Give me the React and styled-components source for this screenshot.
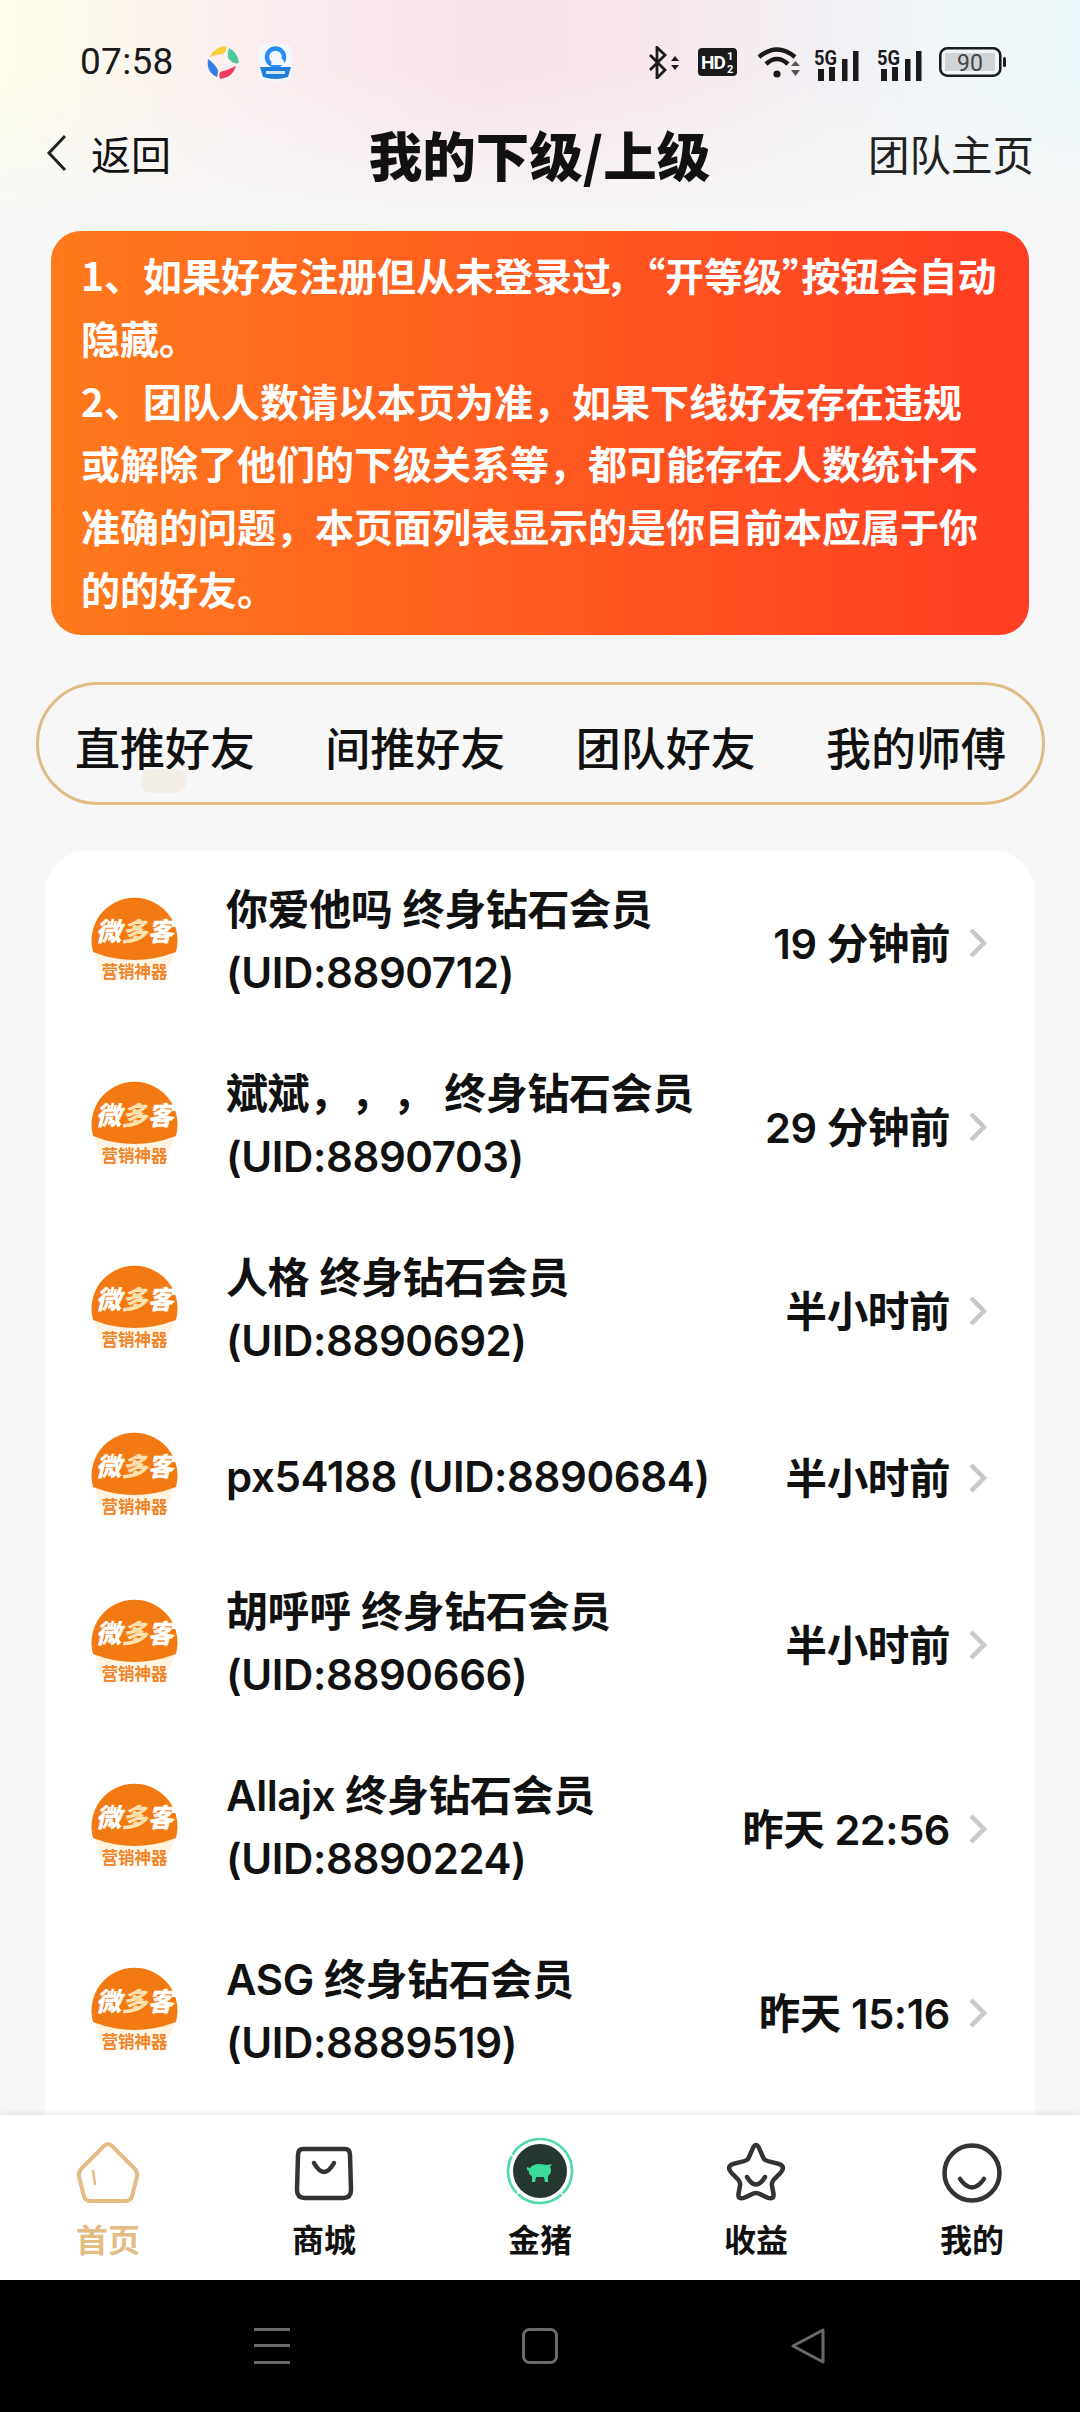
import styled, { createGlobalStyle } from "styled-components";

const Global = createGlobalStyle`
  html, body {
    margin: 0;
    padding: 0;
    background: #f7f7f7;
  }
  * {
    box-sizing: border-box;
  }
`;

const FONT = `"Noto Sans CJK SC", "Noto Sans", sans-serif`;
const LIST_FONT = `Inter, "Noto Sans CJK SC", sans-serif`;

const Page = styled.div`
  width: 1080px;
  height: 2412px;
  display: flex;
  flex-direction: column;
  overflow: hidden;
  font-family: ${FONT};
  text-spacing-trim: space-all;
  color: #111;
  background:
    linear-gradient(to bottom, rgba(247, 247, 247, 0) 0, rgba(247, 247, 247, 0) 70px, #f7f7f7 225px) no-repeat,
    linear-gradient(to right, #fdfdea 0, #fbeff0 22%, #f8e3ea 45%, #f7e8ee 62%, #f0f5f8 85%, #ecf8fb 100%) no-repeat,
    #f7f7f7;
  background-size: 100% 230px, 100% 230px, auto;
`;

const Content = styled.div`
  flex: 1;
  min-height: 0;
  overflow: hidden;
`;

const StatusBar = styled.div`
  height: 80px;
  padding: 44px 73px 0 80px;
  display: flex;
  align-items: center;
`;

const Time = styled.span`
  font-family: Roboto, sans-serif;
  font-size: 37px;
  line-height: 36px;
  color: #1a1a1a;
  letter-spacing: 0.3px;
`;

const AppIcon = styled.svg`
  margin-left: ${(p) => p.$ml}px;
  flex: none;
`;

const StatusRight = styled.div`
  margin-left: auto;
  display: flex;
  align-items: center;
`;

const StatusIcon = styled.svg`
  margin-left: ${(p) => p.$ml || 0}px;
  flex: none;
`;

const NavBar = styled.div`
  height: 150px;
  padding: 0 46px 4px 45px;
  display: grid;
  grid-template-columns: 1fr auto 1fr;
  align-items: center;
`;

const BackLink = styled.div`
  display: flex;
  align-items: center;
  gap: 24px;
  font-size: 40px;
`;

const NavTitle = styled.div`
  font-size: 53.5px;
  font-weight: 900;
`;

const NavAction = styled.div`
  font-size: 41.5px;
  text-align: right;
  color: #222;
`;

const Banner = styled.div`
  margin: 1px 51px 0;
  height: 404px;
  padding: 12px 0 0 30px;
  border-radius: 30px;
  background: linear-gradient(90deg, #ff7a1c 0%, #ff5a20 50%, #ff3d22 100%);
`;

const BannerLine = styled.div`
  height: 62.8px;
  line-height: 62.8px;
  font-size: 39px;
  font-weight: 700;
  color: #fff;
  white-space: nowrap;
`;

const TightMark = styled.span`
  font-feature-settings: "palt";
  margin-right: ${(p) => p.$after || 0}px;
`;

const TabPill = styled.div`
  margin: 47px 35px 0 36px;
  height: 123px;
  padding: 6px 36px 0;
  display: flex;
  justify-content: space-between;
  align-items: center;
  border: 3px solid #e0bd87;
  border-radius: 62px;
`;

const Tab = styled.div`
  position: relative;
  font-size: 45px;
  line-height: 60px;
  font-weight: 500;
  color: #111;
`;

const TabMark = styled.div`
  position: absolute;
  left: 66px;
  top: 52px;
  width: 45px;
  height: 24px;
  border-radius: 10px;
  background: #f3eee6;
`;

const Card = styled.div`
  margin: 46px 45px 0;
  height: 1400px;
  background: #fff;
  border-radius: 42px 42px 0 0;
`;

const Row = styled.div`
  min-height: 150px;
  padding: 27px 47px 27px 44px;
  display: flex;
  align-items: center;
  font-family: ${LIST_FONT};
`;

const Avatar = styled.svg`
  flex: none;
  margin-right: 46px;
`;

const UserText = styled.div`
  flex: 1;
  min-width: 0;
  margin-bottom: 4px;
`;

const UserLine = styled.div`
  font-size: 42px;
  line-height: 63px;
  font-weight: 600;
  letter-spacing: -0.4px;
  white-space: nowrap;
`;

const When = styled.div`
  margin-bottom: 4px;
  font-size: 41.5px;
  font-weight: 600;
  letter-spacing: -0.4px;
  white-space: nowrap;
`;

const Chevron = styled.svg`
  flex: none;
  margin-left: 18px;
`;

const TabBar = styled.div`
  position: relative;
  height: 165px;
  flex: none;
  display: grid;
  grid-template-columns: repeat(5, 216px);
  background: #fff;
  box-shadow: 0 -2px 6px rgba(0, 0, 0, 0.08);
`;

const TabItem = styled.div`
  padding-top: 23px;
  display: flex;
  flex-direction: column;
  align-items: center;
`;

const TabLabel = styled.div`
  margin-top: 14px;
  font-size: 32px;
  line-height: 36px;
  font-weight: 700;
  color: ${(p) => (p.$active ? "#e3bd84" : "#111")};
`;

const SystemBar = styled.div`
  height: 132px;
  flex: none;
  background: #000;
  display: flex;
  justify-content: center;
  align-items: center;
  gap: 232px;
`;

const tabs = ["直推好友", "间推好友", "团队好友", "我的师傅"];

const users = [
  { lines: ["你爱他吗 终身钻石会员", "(UID:8890712)"], when: "19 分钟前" },
  { lines: ["斌斌，，， 终身钻石会员", "(UID:8890703)"], when: "29 分钟前" },
  { lines: ["人格 终身钻石会员", "(UID:8890692)"], when: "半小时前" },
  { lines: ["px54188 (UID:8890684)"], when: "半小时前" },
  { lines: ["胡呼呼 终身钻石会员", "(UID:8890666)"], when: "半小时前" },
  { lines: ["Allajx 终身钻石会员", "(UID:8890224)"], when: "昨天 22:56" },
  { lines: ["ASG 终身钻石会员", "(UID:8889519)"], when: "昨天 15:16" },
];

const LogoAvatar = () => (
  <Avatar width="91" height="96" viewBox="0 0 91 96">
    <defs>
      <linearGradient id="logoCream" x1="0" y1="0" x2="0" y2="1">
        <stop offset="0" stopColor="#fff0d6" />
        <stop offset="1" stopColor="#ffffff" />
      </linearGradient>
    </defs>
    <path d="M6 57 Q45 73 85 57 L76 90 Q45 96 14 90 Z" fill="url(#logoCream)" />
    <path d="M4 57 A43 43 0 1 1 87 57 Q45 73 4 57 Z" fill="#f37a12" />
    <text x="45.5" y="46" textAnchor="middle" fontFamily={FONT} fontSize="26" fontWeight="900" fontStyle="italic" fill="#fff">
      微<tspan fill="#fde0b0">多</tspan>客
    </text>
    <text x="45.5" y="83" textAnchor="middle" fontFamily={FONT} fontSize="16.5" fontWeight="700" fill="#f0842a">
      营销神器
    </text>
  </Avatar>
);

const CloudApp = () => (
  <AppIcon $ml={18} width="37" height="37" viewBox="0 0 37 37">
    <rect x="2" y="0" width="33" height="37" rx="7" fill="#f2f8fe" />
    <circle cx="18.5" cy="13" r="8.5" fill="none" stroke="#2a8bf2" strokeWidth="4.5" />
    <path d="M14 21 Q15 13 21 13 Q27 14 28 21 Z" fill="#f2f8fe" />
    <path d="M3 23 H34 L31 33 Q18.5 37 6 33 Z" fill="#1f7fd8" />
    <rect x="9" y="27" width="19" height="3" fill="#cfe6fb" />
  </AppIcon>
);

const PetalApp = () => (
  <AppIcon $ml={32} width="33" height="33" viewBox="0 0 33 33">
    <path d="M4 11 Q8 1 20 0 Q21 5 17 8 Q10 8 4 11 Z" fill="#f9cf36" />
    <path d="M23 2 Q32 7 33 17 Q27 19 22 12 Q21 7 23 2 Z" fill="#4cc99a" />
    <path d="M30 20 Q27 31 15 33 Q12 31 14 26 Q22 24 30 20 Z" fill="#ee3d5e" />
    <path d="M2 13 Q8 17 12 24 Q12 29 11 31 Q0 26 2 13 Z" fill="#2f7fe6" />
  </AppIcon>
);

const Signal = ({ ml }) => (
  <StatusIcon $ml={ml} width="46" height="37" viewBox="0 -6 46 37" fill="#1a1a1a">
    <text x="0" y="15" fontFamily="Roboto, sans-serif" fontWeight="700" fontSize="20" textLength="23" lengthAdjust="spacingAndGlyphs">5G</text>
    <rect x="4" y="19" width="6" height="12" />
    <rect x="15" y="17" width="6" height="14" />
    <rect x="28" y="9" width="5.5" height="22" />
    <rect x="39" y="1" width="5.5" height="30" />
  </StatusIcon>
);

const StatusIcons = () => (
  <StatusRight>
    <StatusIcon width="32" height="33" viewBox="0 0 32 33" fill="none">
      <path d="M2 9 L17 24 L9 32 V1.5 L17 9 L2 24" stroke="#1a1a1a" strokeWidth="2.8" />
      <path d="M23 15 L27 10 L31 15 Z M23 19 H31 L27 24 Z" fill="#1a1a1a" />
    </StatusIcon>
    <StatusIcon $ml={18} width="39" height="28" viewBox="0 0 39 28">
      <rect width="39" height="28" rx="4" fill="#1a1a1a" />
      <text x="3" y="21" fontFamily="Roboto, sans-serif" fontWeight="700" fontSize="19" letterSpacing="-1" fill="#fff">HD</text>
      <text x="29" y="12" fontFamily="Roboto, sans-serif" fontWeight="700" fontSize="11" fill="#fff">1</text>
      <text x="29" y="25" fontFamily="Roboto, sans-serif" fontWeight="700" fontSize="11" fill="#fff">2</text>
    </StatusIcon>
    <StatusIcon $ml={20} width="43" height="33" viewBox="0 0 43 33" fill="none">
      <path d="M2 11 Q20 -4 38 11" stroke="#1a1a1a" strokeWidth="4.5" />
      <path d="M9 18 Q20 8 31 18" stroke="#1a1a1a" strokeWidth="4.5" />
      <circle cx="20" cy="28" r="3.6" fill="#1a1a1a" />
      <path d="M34 20 L38.5 15 L43 20 Z" fill="#555" />
      <path d="M34 24 H43 L38.5 30 Z" fill="#555" />
    </StatusIcon>
    <Signal ml={14} />
    <Signal ml={17} />
    <StatusIcon $ml={16} width="68" height="30" viewBox="0 0 68 30">
      <rect x="1.3" y="1.3" width="60" height="27.4" rx="7" fill="none" stroke="#1a1a1a" strokeWidth="2.6" />
      <rect x="6" y="6" width="50" height="18" fill="#cfd3d6" />
      <rect x="64" y="10" width="3" height="10" rx="1.5" fill="#1a1a1a" />
      <text x="31" y="23.5" textAnchor="middle" fontFamily="Roboto, sans-serif" fontSize="23" fill="#444">90</text>
    </StatusIcon>
  </StatusRight>
);

const HomeIcon = () => (
  <svg width="68" height="68" viewBox="0 0 68 68" fill="none" stroke="#e3bd84" strokeWidth="4" strokeLinecap="round">
    <path d="M30 8 Q34 4 38 8 L60 30 Q64 34 63 39 L58 58 Q57 63 51 63 L17 63 Q11 63 10 58 L5 39 Q4 34 8 30 Z" />
    <path d="M19 33 L21 46" strokeWidth="2.5" />
  </svg>
);

const ShopIcon = () => (
  <svg width="68" height="68" viewBox="0 0 68 68" fill="none" stroke="#333" strokeWidth="4.5" strokeLinecap="round">
    <path d="M13 11 L55 11 Q60 11 60 17 L61 52 Q61 60 53 60 L15 60 Q7 60 7 52 L8 17 Q8 11 13 11 Z" />
    <path d="M24 25 Q34 43 44 25" />
  </svg>
);

const PigIcon = () => (
  <svg width="68" height="68" viewBox="0 0 68 68" fill="none">
    <circle cx="34" cy="33" r="32" stroke="#4fd8a8" strokeWidth="2.6" strokeDasharray="74 1.5 48 1.5 40 1.5 36 1.5" transform="rotate(-88 34 33)" />
    <circle cx="34" cy="33" r="27" fill="#26372f" />
    <path d="M21 29 L24 30 Q27 26 33 26 L42 27 L46 26 L44 29 Q46 32 44 36 L42 38 L42 44 H39 L38 39 H30 L29 44 H26 L26 38 Q22 36 23 33 L21 32 Z" fill="#3bdc9b" />
  </svg>
);

const StarIcon = () => (
  <svg width="68" height="68" viewBox="0 0 68 68" fill="none" stroke="#333" strokeWidth="4.5" strokeLinecap="round">
    <path d="M34 7 C37 7 39 16 42 21 C45 25 61 24 61 30 C61 35 51 40 50 45 C49 50 54 58 50 60 C46 62 39 55 34 55 C29 55 22 62 18 60 C14 58 19 50 18 45 C17 40 7 35 7 30 C7 24 23 25 26 21 C29 16 31 7 34 7 Z" />
    <path d="M25 39 Q34 54 43 39" />
  </svg>
);

const MeIcon = () => (
  <svg width="68" height="68" viewBox="0 0 68 68" fill="none" stroke="#333" strokeWidth="4.5" strokeLinecap="round">
    <circle cx="34" cy="35" r="27.5" />
    <path d="M22 41 Q34 58 46 41" />
  </svg>
);

const navItems = [
  { label: "首页", Icon: HomeIcon, active: true },
  { label: "商城", Icon: ShopIcon },
  { label: "金猪", Icon: PigIcon },
  { label: "收益", Icon: StarIcon },
  { label: "我的", Icon: MeIcon },
];

export default function App() {
  return (
    <Page>
      <Global />
      <Content>
        <StatusBar>
          <Time>07:58</Time>
          <PetalApp />
          <CloudApp />
          <StatusIcons />
        </StatusBar>
        <NavBar>
          <BackLink>
            <svg width="22" height="40" viewBox="0 0 22 40" fill="none">
              <path d="M20 3 L4 20 L20 37" stroke="#222" strokeWidth="3" />
            </svg>
            返回
          </BackLink>
          <NavTitle>我的下级/上级</NavTitle>
          <NavAction>团队主页</NavAction>
        </NavBar>
        <Banner>
          <BannerLine>
            1、如果好友注册但从未登录过<TightMark $after={15}>，</TightMark><TightMark>“</TightMark>开等级<TightMark>”</TightMark>按钮会自动
          </BannerLine>
          <BannerLine>隐藏。</BannerLine>
          <BannerLine>2、团队人数请以本页为准，如果下线好友存在违规</BannerLine>
          <BannerLine>或解除了他们的下级关系等，都可能存在人数统计不</BannerLine>
          <BannerLine>准确的问题，本页面列表显示的是你目前本应属于你</BannerLine>
          <BannerLine>的的好友。</BannerLine>
        </Banner>
        <TabPill>
          {tabs.map((t, i) => (
            <Tab key={t}>
              {t}
              {i === 0 && <TabMark />}
            </Tab>
          ))}
        </TabPill>
        <Card>
          {users.map((u) => (
            <Row key={u.lines[0]}>
              <LogoAvatar />
              <UserText>
                {u.lines.map((l) => (
                  <UserLine key={l}>{l}</UserLine>
                ))}
              </UserText>
              <When>{u.when}</When>
              <Chevron width="20" height="32" viewBox="0 0 20 32" fill="none">
                <path d="M3 3 L16 16 L3 29" stroke="#c8c8c8" strokeWidth="4.5" />
              </Chevron>
            </Row>
          ))}
        </Card>
      </Content>
      <TabBar>
        {navItems.map(({ label, Icon, active }) => (
          <TabItem key={label}>
            <Icon />
            <TabLabel $active={active}>{label}</TabLabel>
          </TabItem>
        ))}
      </TabBar>
      <SystemBar>
        <svg width="36" height="36" viewBox="0 0 36 36" fill="#6a6a6a">
          <rect y="0" width="36" height="3" />
          <rect y="16" width="36" height="3" />
          <rect y="33" width="36" height="3" />
        </svg>
        <svg width="36" height="36" viewBox="0 0 36 36" fill="none">
          <rect x="1.5" y="1.5" width="33" height="33" rx="6" stroke="#6a6a6a" strokeWidth="3" />
        </svg>
        <svg width="36" height="36" viewBox="0 0 36 36" fill="none">
          <path d="M33 2 V34 L3 18 Z" stroke="#6a6a6a" strokeWidth="3" strokeLinejoin="round" />
        </svg>
      </SystemBar>
    </Page>
  );
}
